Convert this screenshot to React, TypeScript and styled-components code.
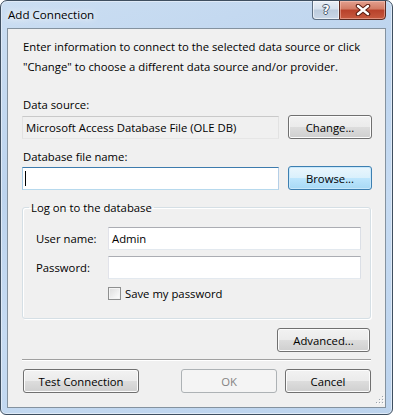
import styled, { createGlobalStyle } from "styled-components";

const GlobalStyle = createGlobalStyle`
  html, body { margin: 0; padding: 0; background: #ffffff; }
  body {
    font-family: "Open Sans", "Noto Sans", sans-serif;
    font-size: 11.3px;
    color: #000;
  }
  * { box-sizing: border-box; }
`;

const App = () => {
  return (
    <>
      <GlobalStyle />
      <Window>
        <TitleBar>
          <Title>Add Connection</Title>
          <CaptionButtons>
            <HelpButton>?</HelpButton>
            <CloseButton>
              <svg width="18" height="12" viewBox="0 0 18 12">
                <path d="M4 2 L14 10 M14 2 L4 10" stroke="#5a1d12" strokeWidth="4.5" strokeLinecap="round" />
                <path d="M4 2 L14 10 M14 2 L4 10" stroke="#ffffff" strokeWidth="2.4" strokeLinecap="round" />
              </svg>
            </CloseButton>
          </CaptionButtons>
        </TitleBar>
        <Client>
          <Intro>
            Enter information to connect to the selected data source or click
            <br />
            "Change" to choose a different data source and/or provider.
          </Intro>

          <Label $top={20}>Data source:</Label>
          <FieldRow $top={3}>
            <ReadOnlyField>Microsoft Access Database File (OLE DB)</ReadOnlyField>
            <Button $width={84}>Change...</Button>
          </FieldRow>

          <Label $top={10}>Database file name:</Label>
          <FieldRow $top={2}>
            <TextBox $focused>
              <Caret />
            </TextBox>
            <Button $width={84} $default>Browse...</Button>
          </FieldRow>

          <GroupBox>
            <Legend>Log on to the database</Legend>
            <LoginGrid>
              <FormLabel>User name:</FormLabel>
              <TextBox>Admin</TextBox>
              <FormLabel>Password:</FormLabel>
              <TextBox />
              <span />
              <CheckRow>
                <CheckBox />
                <span>Save my password</span>
              </CheckRow>
            </LoginGrid>
          </GroupBox>

          <AdvancedRow>
            <Button $width={93}>Advanced...</Button>
          </AdvancedRow>

          <Separator />

          <ActionRow>
            <Button $width={116}>Test Connection</Button>
            <Spacer />
            <Button $width={96} disabled>OK</Button>
            <Button $width={86}>Cancel</Button>
          </ActionRow>

          <Grip>
            <svg width="10" height="10" viewBox="0 0 10 10">
              {[
                [8, 0], [8, 3], [5, 3], [8, 6], [5, 6], [2, 6],
              ].map(([x, y]) => (
                <g key={`${x}-${y}`}>
                  <rect x={x + 1} y={y + 1} width="1" height="1" fill="#ffffff" />
                  <rect x={x} y={y} width="1" height="1" fill="#9aa3ad" />
                </g>
              ))}
            </svg>
          </Grip>
        </Client>
      </Window>
    </>
  );
};

const Window = styled.div`
  width: 393px;
  height: 415px;
  display: flex;
  flex-direction: column;
  border: 1px solid #3f4f60;
  border-radius: 7px 7px 6px 6px;
  background: linear-gradient(160deg, #cbdef2 0%, #bdd4ee 35%, #c6dbf2 60%, #bcd3ed 100%);
  box-shadow: inset 0 0 0 1px #dfeaf7;
  overflow: hidden;
`;

const TitleBar = styled.div`
  height: 27px;
  display: flex;
  align-items: flex-start;
  flex-shrink: 0;
`;

const Title = styled.div`
  padding: 6px 0 0 7px;
  line-height: 16px;
  font-size: 11.6px;
  color: #000;
  text-shadow: 0 0 6px #ffffff, 0 0 10px #ffffff;
`;

const CaptionButtons = styled.div`
  margin-left: auto;
  margin-right: 6px;
  margin-top: -1px;
  display: flex;
`;

const HelpButton = styled.div`
  width: 27px;
  height: 20px;
  border: 1px solid #5d6f83;
  border-right: none;
  border-radius: 0 0 0 4px;
  background: linear-gradient(#e9eff6 0%, #d6e1ee 45%, #bccbdc 50%, #c9d7e7 100%);
  box-shadow: inset 0 0 0 1px rgba(255, 255, 255, 0.6);
  display: flex;
  align-items: center;
  justify-content: center;
  font-family: "DejaVu Sans", sans-serif;
  font-weight: bold;
  font-size: 12px;
  color: #ffffff;
  text-shadow: -1px 0 #46566a, 1px 0 #46566a, 0 -1px #46566a, 0 1px #46566a;
`;

const CloseButton = styled.div`
  width: 47px;
  height: 20px;
  border: 1px solid #5b2a20;
  border-radius: 0 0 4px 0;
  background: linear-gradient(#e3a08f 0%, #d27a63 45%, #b8412a 50%, #c65a40 100%);
  box-shadow: inset 0 0 0 1px rgba(255, 210, 200, 0.45);
  display: flex;
  align-items: center;
  justify-content: center;
`;

const Client = styled.div`
  position: relative;
  flex: 1;
  margin: 0 6px 6px;
  border: 1px solid #84929f;
  background: #f0f0f0;
  padding: 8px 14px 0 14px;
  display: flex;
  flex-direction: column;
`;

const Intro = styled.div`
  line-height: 20px;
  padding-left: 1px;
  white-space: nowrap;
`;

const Label = styled.div<{ $top: number }>`
  margin-top: ${(p) => p.$top}px;
  line-height: 15px;
  padding-left: 1px;
`;

const FieldRow = styled.div<{ $top: number }>`
  margin-top: ${(p) => p.$top}px;
  height: 24px;
  display: flex;
  align-items: center;
  gap: 9px;
`;

const TextBox = styled.div<{ $focused?: boolean }>`
  flex: 0 0 257px;
  height: 23px;
  background: #ffffff;
  border: 1px solid;
  border-color: ${(p) =>
    p.$focused ? "#3d7bad #b5cfe7 #b7d9ed #a4c9e3" : "#abadb3 #dbdfe6 #e3e9ef #e2e3ea"};
  display: flex;
  align-items: center;
  padding-left: 3px;
  line-height: 15px;
`;

const ReadOnlyField = styled(TextBox)`
  background: #f0f0f0;
  border-color: #c9c9c9 #e2e2e2 #e6e6e6 #e2e2e2;
`;

const Caret = styled.span`
  width: 1px;
  height: 15px;
  margin-left: -1px;
  background: #000;
`;

const Button = styled.button<{ $width: number; $default?: boolean }>`
  width: ${(p) => p.$width}px;
  height: 24px;
  flex-shrink: 0;
  padding: 0;
  font: inherit;
  color: #000;
  border: 1px solid ${(p) => (p.$default ? "#3c7fb1" : "#707070")};
  border-radius: 3px;
  background: ${(p) =>
    p.$default
      ? "linear-gradient(#eaf6fd 0%, #d9f0fc 50%, #bee6fd 50%, #a7d9f5 100%)"
      : "linear-gradient(#f2f2f2 0%, #ebebeb 50%, #dddddd 50%, #cfcfcf 100%)"};
  box-shadow: inset 0 0 0 1px ${(p) => (p.$default ? "#c8e8fb" : "#fcfcfc")};

  &:disabled {
    color: #838383;
    border-color: #adb2b5;
    background: #f4f4f4;
    box-shadow: inset 0 0 0 1px #f4f4f4;
  }
`;

const GroupBox = styled.fieldset`
  margin: 10px 0 0 0;
  padding: 12px 10px 17px 13px;
  min-width: 0;
  border: 1px solid #d5dfe5;
  border-radius: 3px;
  box-shadow: 1px 1px 0 #ffffff, inset 1px 1px 0 #ffffff;
`;

const Legend = styled.legend`
  margin-left: -7px;
  padding: 0 2px;
  line-height: 15px;
`;

const LoginGrid = styled.div`
  display: grid;
  grid-template-columns: 72px 253px;
  row-gap: 6px;
  align-items: center;
`;

const FormLabel = styled.span`
  line-height: 15px;
`;

const CheckRow = styled.label`
  margin-top: 1px;
  display: flex;
  align-items: center;
  gap: 4px;
  line-height: 15px;
`;

const CheckBox = styled.span`
  width: 13px;
  height: 13px;
  border: 1px solid #8e8f8f;
  background: linear-gradient(135deg, #dcdcdc 0%, #f4f4f4 70%, #ffffff 100%);
  box-shadow: inset 0 0 0 1px #f4f4f4;
`;

const AdvancedRow = styled.div`
  margin-top: 9px;
  display: flex;
  justify-content: flex-end;
  padding-right: 1px;
`;

const Separator = styled.div`
  margin-top: 7px;
  height: 2px;
  border-top: 1px solid #a0a0a0;
  border-bottom: 1px solid #ffffff;
`;

const ActionRow = styled.div`
  margin-top: 8px;
  display: flex;
  gap: 8px;
  padding-left: 1px;
`;

const Spacer = styled.div`
  flex: 1;
`;

const Grip = styled.div`
  position: absolute;
  right: 1px;
  bottom: 1px;
  width: 10px;
  height: 10px;
  display: flex;
`;

export default App;
